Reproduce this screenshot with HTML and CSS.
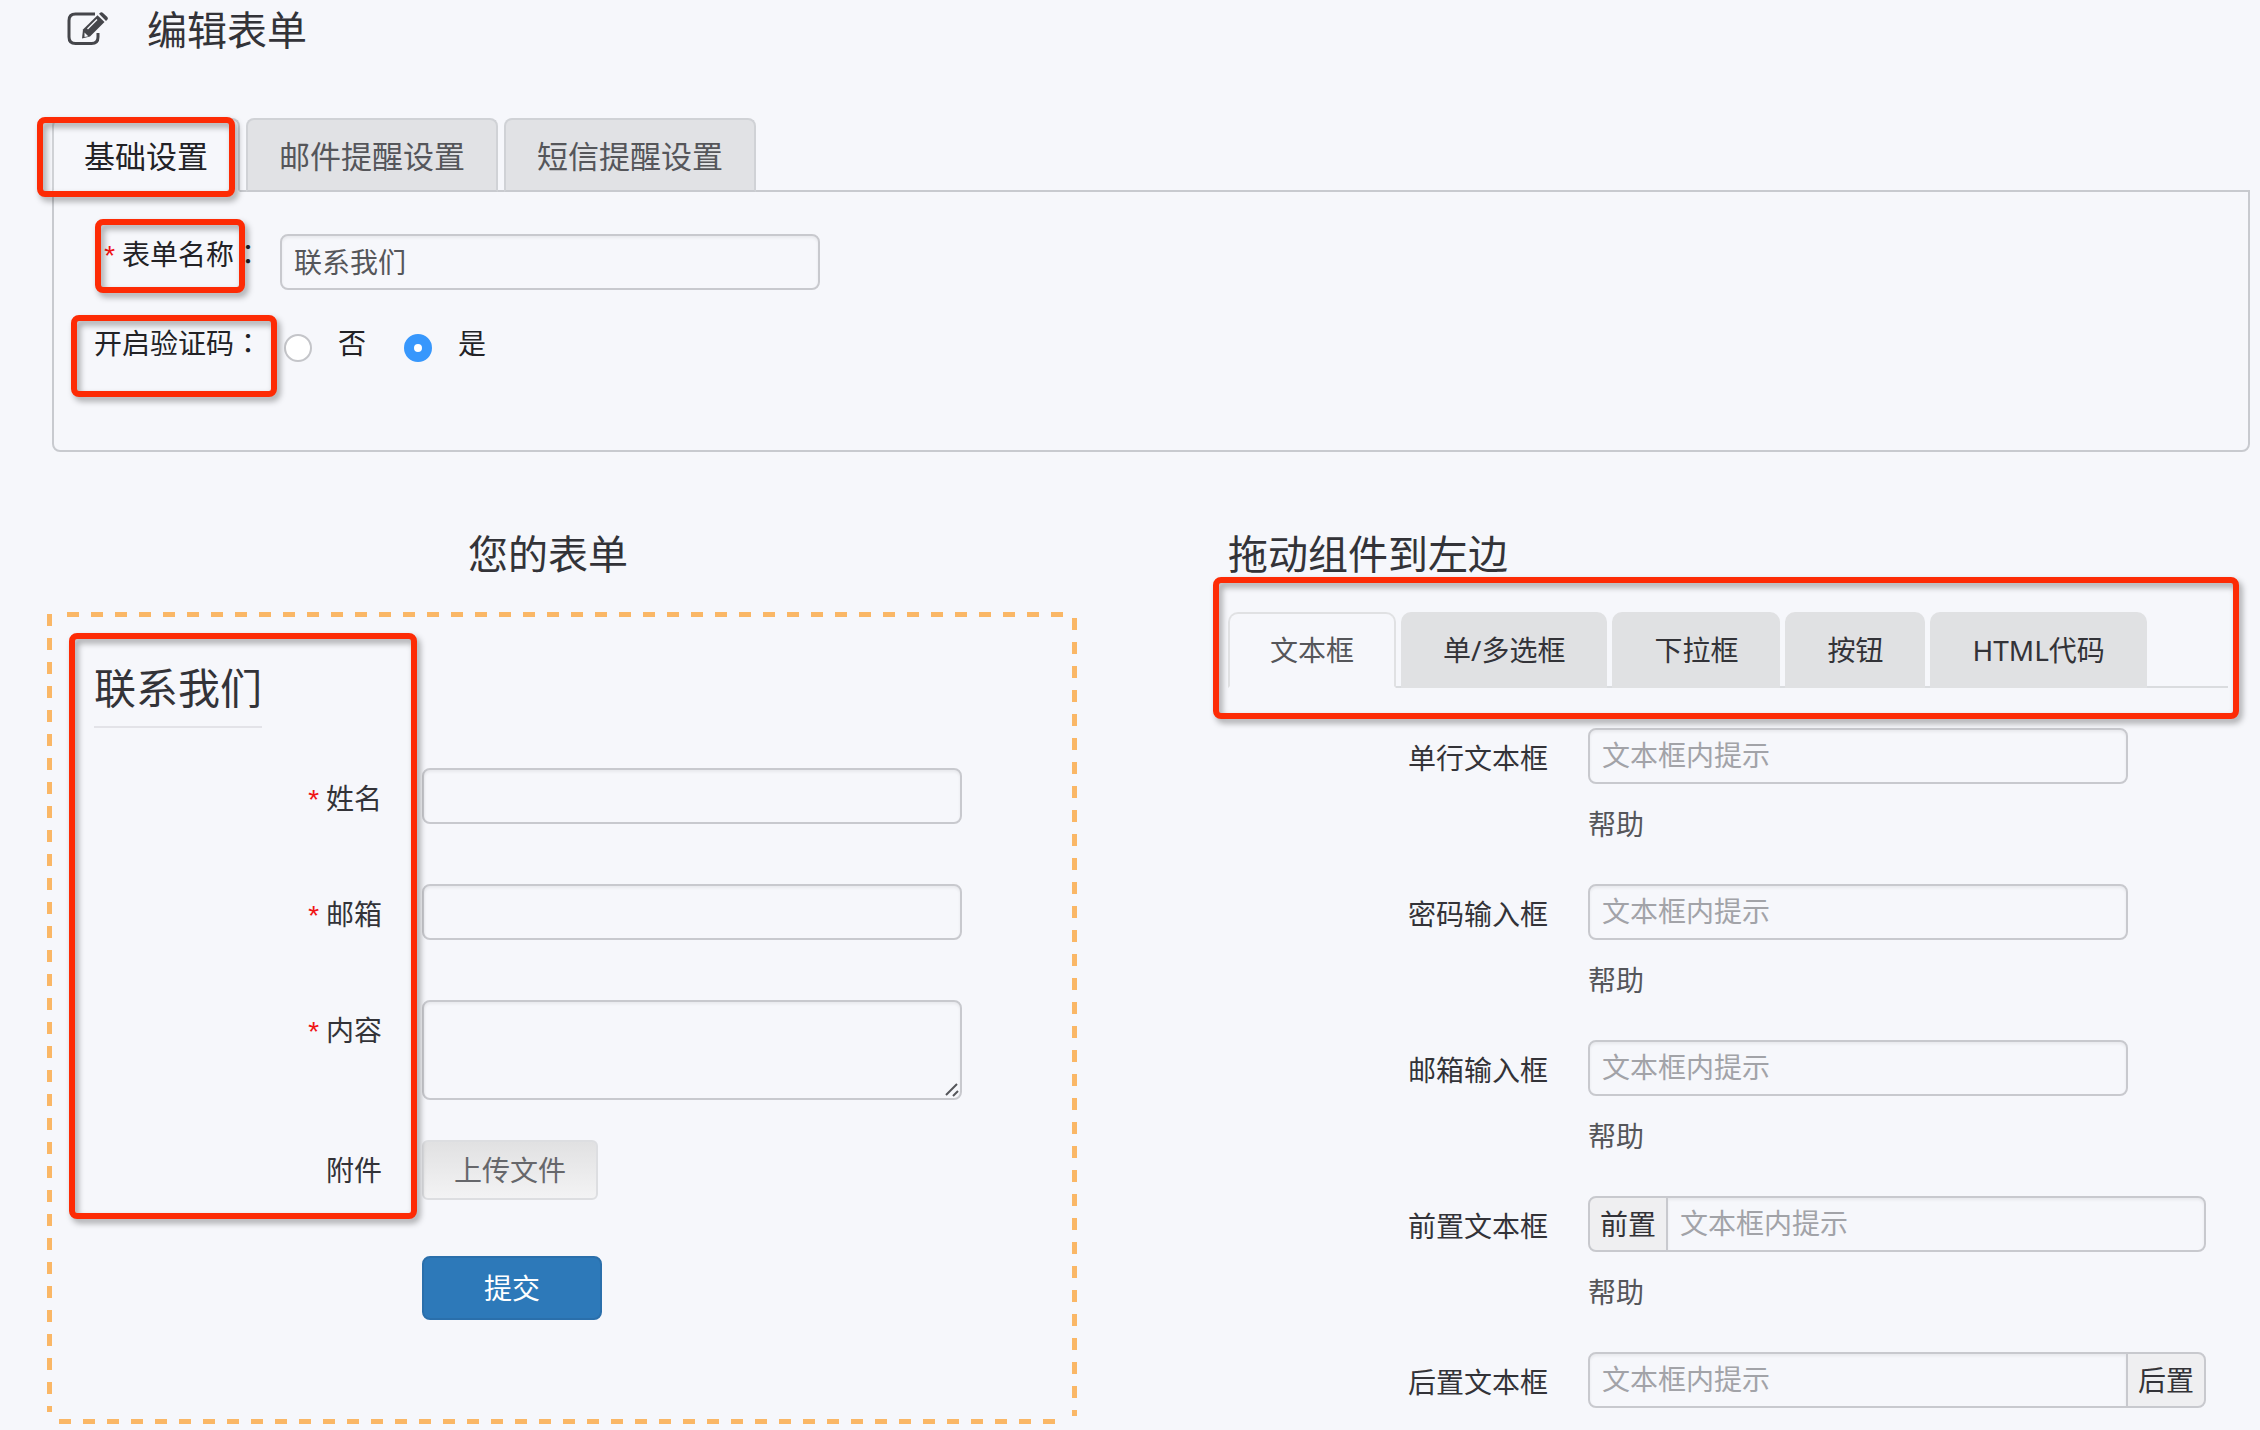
FILE: index.html
```html
<!DOCTYPE html>
<html lang="zh-CN">
<head>
<meta charset="utf-8">
<title>编辑表单</title>
<link rel="stylesheet" href="styles.css">
</head>
<body>
<header class="page-head">
  <svg class="edit-icon" viewBox="0 0 42 34" aria-hidden="true">
    <path d="M28 2H8.500Q2 2 2 8.500V25Q2 31.500 8.500 31.500H24.500Q31 31.500 31 25V21" fill="none" stroke="#45464b" stroke-width="3"/>
    <path d="M16 17.500L30.500 3.200L37.500 10L23 24.500L15 26.500Z" fill="#45464b"/>
    <path d="M32 1.800L33.500 .6Q34.800 -.2 36 1L40.300 5Q41.500 6.300 40.500 7.500L39 9Z" fill="#45464b"/>
    <path d="M30.500 1.800L39.500 10.500" stroke="#f6f7fb" stroke-width="1"/>
    <path d="M20.500 17L30 7.500" stroke="#f6f7fb" stroke-width="1.500"/>
    <path d="M17.500 20.500L21.300 24.200L17.500 25Z" fill="#f6f7fb"/>
  </svg>
  <h1>编辑表单</h1>
</header>

<main>
  <section class="settings">
    <ul class="tabs" role="tablist">
      <li><button class="tab active" type="button" role="tab" aria-selected="true">基础设置</button><span class="mark mark-tab"></span></li>
      <li><button class="tab" type="button" role="tab">邮件提醒设置</button></li>
      <li><button class="tab" type="button" role="tab">短信提醒设置</button></li>
    </ul>
    <form class="panel">
      <div class="setting-row">
        <label class="setting-label" for="form-name"><i class="req">*</i>表单名称<span class="colon" lang="zh-TW">：</span></label>
        <input class="field" id="form-name" type="text" value="联系我们">
        <span class="mark mark-name"></span>
      </div>
      <div class="setting-row" role="radiogroup" aria-labelledby="captcha-label">
        <span class="setting-label" id="captcha-label">开启验证码<span class="colon" lang="zh-TW">：</span></span>
        <div class="radios">
          <label class="radio"><input type="radio" name="captcha" value="0">否</label>
          <label class="radio"><input type="radio" name="captcha" value="1" checked>是</label>
        </div>
        <span class="mark mark-captcha"></span>
      </div>
    </form>
  </section>

  <div class="columns">
    <section>
      <h2 class="preview-title">您的表单</h2>
      <form class="dropzone">
        <h3>联系我们</h3>
        <div class="row"><label for="f-name"><i class="req">*</i>姓名</label><input class="field" id="f-name" type="text"></div>
        <div class="row"><label for="f-mail"><i class="req">*</i>邮箱</label><input class="field" id="f-mail" type="email"></div>
        <div class="row row-area"><label for="f-text"><i class="req">*</i>内容</label><textarea class="field" id="f-text"></textarea></div>
        <div class="row"><label for="f-file">附件</label><button class="upload" id="f-file" type="button">上传文件</button></div>
        <div class="row"><button class="submit" type="submit">提交</button></div>
        <span class="mark mark-labels"></span>
      </form>
    </section>

    <section>
      <h2>拖动组件到左边</h2>
      <div class="parts">
        <ul class="part-tabs" role="tablist">
          <li><button class="part-tab active" type="button" role="tab" aria-selected="true">文本框</button></li>
          <li><button class="part-tab" type="button" role="tab">单/多选框</button></li>
          <li><button class="part-tab" type="button" role="tab">下拉框</button></li>
          <li><button class="part-tab" type="button" role="tab">按钮</button></li>
          <li><button class="part-tab" type="button" role="tab">HTML代码</button></li>
        </ul>
        <span class="mark mark-parts"></span>
      </div>
      <form class="part-list">
        <div class="part"><label for="p1">单行文本框</label><div><input class="field" id="p1" type="text" placeholder="文本框内提示"><p>帮助</p></div></div>
        <div class="part"><label for="p2">密码输入框</label><div><input class="field" id="p2" type="password" placeholder="文本框内提示"><p>帮助</p></div></div>
        <div class="part"><label for="p3">邮箱输入框</label><div><input class="field" id="p3" type="email" placeholder="文本框内提示"><p>帮助</p></div></div>
        <div class="part"><label for="p4">前置文本框</label><div><div class="group prepend"><span class="addon">前置</span><input class="field" id="p4" type="text" placeholder="文本框内提示"></div><p>帮助</p></div></div>
        <div class="part"><label for="p5">后置文本框</label><div><div class="group append"><input class="field" id="p5" type="text" placeholder="文本框内提示"><span class="addon">后置</span></div></div></div>
      </form>
    </section>
  </div>
</main>
</body>
</html>
```
FILE: styles.css
```css
* { box-sizing: border-box; }

body {
  margin: 0;
  background: #f6f7fb;
  color: #333338;
  font: 28px/40px "Noto Sans", "Noto Sans CJK SC", sans-serif;
}

h1, h2, h3, p, ul { margin: 0; padding: 0; font-weight: 400; }
ul { list-style: none; display: flex; }
button, input, textarea { font: inherit; color: inherit; margin: 0; }
h1, h2 { font-size: 40px; line-height: 60px; }

.page-head { display: flex; align-items: flex-start; gap: 38px; padding-left: 67px; }
.edit-icon { width: 42px; height: 34px; margin-top: 12px; overflow: visible; }

main { padding: 58px 10px 0 47px; }

/* Settings */
.settings { padding-left: 5px; }
.tabs { gap: 6px; }
.tabs li { position: relative; }
.tab {
  display: block;
  height: 74px;
  padding: 2px 31px 0;
  border: 2px solid #d0d2d6;
  border-bottom-color: #c8cacf;
  border-radius: 8px 8px 0 0;
  background: #e1e2e5;
  color: #55565a;
  font-size: 31px;
}
.tab.active {
  position: relative;
  z-index: 1;
  padding: 2px 30px 0;
  background: #f6f7fb;
  border-bottom-color: #f6f7fb;
  color: #222226;
}
.panel {
  display: flex;
  flex-direction: column;
  gap: 33px;
  margin-top: -2px;
  padding: 42px 0 87px;
  border: 2px solid #c8cacf;
  border-radius: 0 0 8px 8px;
}
.setting-row { position: relative; display: flex; align-items: flex-start; gap: 18px; }
.setting-label { width: 208px; height: 40px; text-align: right; color: #222226; }
.colon { font-family: "Noto Sans CJK TC", sans-serif; line-height: 1; }
.req {
  margin-right: 8px;
  color: #f01414;
  font: italic 28px/1 "Liberation Sans", sans-serif;
}

.field {
  display: block;
  width: 540px;
  max-width: 100%;
  height: 56px;
  padding: 0 12px 2px;
  border: 2px solid #c8c9ce;
  border-radius: 8px;
  background: transparent;
  box-shadow: inset 0 2px 3px rgba(0, 0, 0, .06);
  color: #55565a;
}
.field::placeholder { color: #a2a3a8; opacity: 1; }
textarea.field { height: 100px; padding: 8px 12px; }
textarea.field::-webkit-resizer {
  background: url("data:image/svg+xml,%3Csvg xmlns='http://www.w3.org/2000/svg' width='15' height='15'%3E%3Cpath d='M1 12L12 1M8 13L13 8' stroke='%2355565a' stroke-width='2'/%3E%3C/svg%3E") no-repeat;
}

.radios { display: flex; gap: 38px; padding-left: 4px; }
.radio { display: flex; align-items: flex-start; gap: 26px; color: #222226; }
.radio input {
  appearance: none;
  width: 28px;
  height: 28px;
  margin-top: 11px;
  border: 2px solid #c4c5c9;
  border-radius: 50%;
  background: #fff;
}
.radio input:checked { border: 10px solid #3797fc; }

/* Builder columns */
.columns {
  display: grid;
  grid-template-columns: 1030fr 1000fr;
  gap: 151px;
  padding: 72px 22px 6px 0;
}
.columns h2 { margin-bottom: 28px; }
.preview-title { padding-right: 28px; text-align: center; }

.dropzone {
  --h: repeating-linear-gradient(90deg, #fab766 0 12px, transparent 12px 24px);
  --v: repeating-linear-gradient(180deg, #fab766 0 12px, transparent 12px 24px);
  position: relative;
  padding: 46px 47px 48px;
  background:
    var(--h) 20px 0 / 1008px 5px no-repeat,
    var(--h) 12px 100% / 1008px 5px no-repeat,
    var(--v) 0 2px / 5px calc(100% - 14px) no-repeat,
    var(--v) 100% 6px / 5px calc(100% - 14px) no-repeat;
}
.dropzone h3 {
  width: max-content;
  margin-bottom: 40px;
  padding-bottom: 8px;
  border-bottom: 2px solid #e3e3e8;
  font-size: 42px;
  line-height: 60px;
}
.row { display: flex; gap: 40px; min-height: 60px; margin-bottom: 56px; }
.row-area { margin-bottom: 40px; }
.row label { width: 288px; height: 60px; text-align: right; line-height: 60px; }
.upload {
  height: 60px;
  padding: 0 30px;
  border: 2px solid #dddee1;
  border-radius: 6px;
  background: linear-gradient(#e1e1e2, #f3f3f4);
  color: #66676b;
}
.submit {
  width: 180px;
  height: 64px;
  margin-left: 328px;
  border: 2px solid #2a6fab;
  border-radius: 8px;
  background: #2d79b9;
  color: #fff;
}

.parts { position: relative; }
.part-tabs { gap: 5px; border-bottom: 2px solid #dadcdf; }
.part-tab {
  display: block;
  height: 76px;
  margin-bottom: -2px;
  padding: 0 40px;
  border: 2px solid #e0e1e3;
  border-radius: 10px 10px 0 0;
  background: #e0e1e3;
}
.part-tab.active {
  background: #f6f7fb;
  border-bottom-color: #f6f7fb;
  color: #55565a;
}
.part-list { display: grid; gap: 40px; padding-top: 40px; }
.part { display: grid; grid-template-columns: 320px 1fr; gap: 40px; }
.part label { text-align: right; line-height: 60px; }
.part p { margin-top: 20px; color: #55565a; }

.group { display: flex; width: 618px; max-width: 100%; }
.group .field { flex: 1; min-width: 0; }
.addon {
  width: 80px;
  padding: 6px 0;
  border: 2px solid #c8c9ce;
  background: #efeff1;
  text-align: center;
}
.prepend .addon { border-radius: 8px 0 0 8px; margin-right: -2px; }
.prepend .field { border-radius: 0 8px 8px 0; }
.append .addon { border-radius: 0 8px 8px 0; margin-left: -2px; }
.append .field { border-radius: 8px 0 0 8px; }

/* Red callout frames laid over the areas they point at */
.mark {
  position: absolute;
  z-index: 2;
  border: 6px solid #fd2b05;
  border-radius: 8px;
  filter: drop-shadow(3px 4px 3px rgba(0, 0, 0, .35));
  pointer-events: none;
}
.mark-tab { inset: -1px 5px -5px -15px; }
.mark-name { top: -15px; left: 41px; width: 150px; height: 74px; }
.mark-captcha { top: -8px; left: 17px; width: 206px; height: 82px; }
.mark-labels { top: 21px; left: 22px; width: 348px; height: 586px; }
.mark-parts { inset: -35px -11px -31px -15px; }
```
